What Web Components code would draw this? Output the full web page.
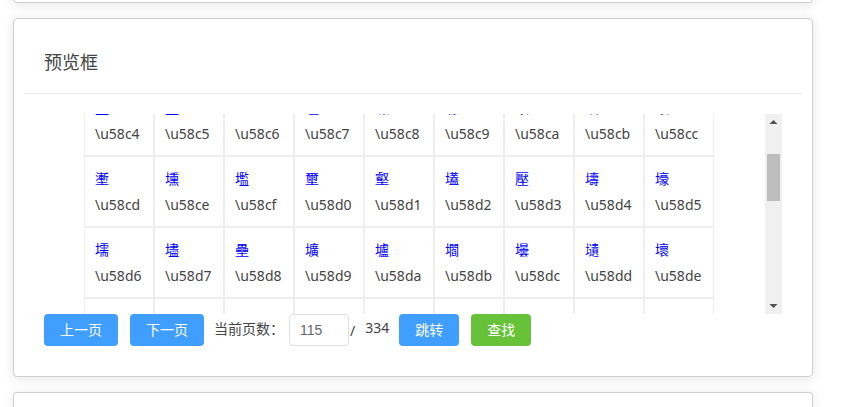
<!DOCTYPE html>
<html lang="zh">
<head>
<meta charset="utf-8">
<title>预览框</title>
<style>
html, body { margin: 0; height: 100%; overflow: hidden; background: #fff; }
body { font-family: "Noto Sans", "Noto Sans CJK SC", sans-serif; color: #444; }
</style>
</head>
<body>
<demo-page>
    <stub-card></stub-card>
    <preview-card heading="预览框">
        <glyph-scroller first="0x58c4" rows="3" blank-rows="1"></glyph-scroller>
        <pager-bar current="115" total="334"></pager-bar>
    </preview-card>
    <stub-card></stub-card>
</demo-page>

<script>
const GLYPH_COLUMNS = 9;
const CARD_STYLES = `
    box-sizing: border-box;
    width: 800px;
    background: #fff;
    border: 1px solid #cfcfcf;
    border-radius: 4px;
    box-shadow: 0 2px 12px rgba(0, 0, 0, 0.1);
`;

class DemoPage extends HTMLElement {
    constructor() {
        super();
        this.attachShadow({ mode: "open" });
        this.shadowRoot.innerHTML = `
<style>
:host { display: flex; flex-direction: column; gap: 15px; padding-left: 13px; margin-top: -38px; }
</style>
<slot></slot>
`;
    }
}

class StubCard extends HTMLElement {
    constructor() {
        super();
        this.attachShadow({ mode: "open" });
        this.shadowRoot.innerHTML = `
<style>
:host { display: block; height: 41px; ${CARD_STYLES} }
:host(:last-child) { height: 15px; border-bottom: 0; border-radius: 4px 4px 0 0; }
</style>
`;
    }
}

class PreviewCard extends HTMLElement {
    constructor() {
        super();
        this.attachShadow({ mode: "open" });
        this.shadowRoot.innerHTML = `
<style>
:host { display: block; height: 359px; ${CARD_STYLES} }
.header {
    box-sizing: content-box;
    display: flex;
    align-items: center;
    height: 64px;
    margin: 0 10px;
    padding: 10px 20px 0;
    border-bottom: 1px solid #ebebeb;
    font-size: 18px;
    color: #444;
}
.body { padding: 20px 30px 0; }
</style>
<div class="header"></div>
<div class="body"><slot></slot></div>
`;
    }

    connectedCallback() {
        this.shadowRoot.querySelector(".header").textContent = this.getAttribute("heading");
    }
}

class GlyphScroller extends HTMLElement {
    constructor() {
        super();
        this.attachShadow({ mode: "open" });
        this.shadowRoot.innerHTML = `
<style>
:host { display: flex; height: 200px; }
.view { flex: 1; overflow: hidden; padding-left: 40px; }
.grid {
    display: grid;
    grid-template-columns: repeat(${GLYPH_COLUMNS}, 70px);
    grid-auto-rows: 71px;
    margin-top: -29px;
}
</style>
<div class="view"><div class="grid"></div></div>
<glyph-scrollbar></glyph-scrollbar>
`;
    }

    connectedCallback() {
        const grid = this.shadowRoot.querySelector(".grid");
        const first = parseInt(this.getAttribute("first"), 16);
        const count = Number(this.getAttribute("rows")) * GLYPH_COLUMNS;
        const blanks = Number(this.getAttribute("blank-rows")) * GLYPH_COLUMNS;

        for (let i = 0; i < count; i++) {
            const cell = document.createElement("glyph-cell");
            cell.setAttribute("code", (first + i).toString(16));
            grid.appendChild(cell);
        }

        // the next row only shows its borders above the pager
        for (let i = 0; i < blanks; i++) {
            grid.appendChild(document.createElement("glyph-cell"));
        }
    }
}

class GlyphCell extends HTMLElement {
    constructor() {
        super();
        this.attachShadow({ mode: "open" });
        this.shadowRoot.innerHTML = `
<style>
:host {
    box-sizing: border-box;
    display: flex;
    flex-direction: column;
    justify-content: center;
    gap: 6px;
    padding-left: 10px;
    border: 1px solid #eeeeee;
    font-size: 14px;
    line-height: 20px;
    color: #444;
}
.char { color: #0000ff; }
</style>
<div class="char"></div>
<div class="code"></div>
`;
    }

    connectedCallback() {
        const code = this.getAttribute("code");
        if (!code) return;

        this.shadowRoot.querySelector(".char").textContent = String.fromCharCode(parseInt(code, 16));
        this.shadowRoot.querySelector(".code").textContent = "\\u" + code;
    }
}

class GlyphScrollbar extends HTMLElement {
    constructor() {
        super();
        this.attachShadow({ mode: "open" });
        this.shadowRoot.innerHTML = `
<style>
:host { display: flex; flex-direction: column; width: 17px; background: #f0f0f0; }
.arrow { display: block; width: 17px; height: 17px; flex: none; }
.track { flex: 1; padding: 23px 2px 0; }
.thumb { height: 47px; background: #bdbdbd; }
</style>
<svg class="arrow" viewBox="0 0 17 17"><path d="M8.5 6 L12.5 10 L4.5 10 Z" fill="#505050"/></svg>
<div class="track"><div class="thumb"></div></div>
<svg class="arrow" viewBox="0 0 17 17"><path d="M4.5 7 L12.5 7 L8.5 11 Z" fill="#505050"/></svg>
`;
    }
}

class UiButton extends HTMLElement {
    constructor() {
        super();
        this.attachShadow({ mode: "open" });
        this.shadowRoot.innerHTML = `
<style>
:host {
    box-sizing: border-box;
    display: flex;
    align-items: center;
    justify-content: center;
    height: 32px;
    width: 60px;
    padding-bottom: 2px;
    border-radius: 4px;
    background: #409eff;
    color: #fff;
    font-size: 14px;
}
:host([wide]) { width: 74px; }
:host([kind="success"]) { background: #67c23a; }
</style>
<slot></slot>
`;
    }
}

class PagerBar extends HTMLElement {
    constructor() {
        super();
        this.attachShadow({ mode: "open" });
        this.shadowRoot.innerHTML = `
<style>
:host { display: flex; align-items: center; height: 32px; font-size: 14px; color: #444; }
ui-button { margin-right: 12px; }
.label { margin-left: -2px; margin-right: 5px; margin-bottom: 5px; }
input {
    box-sizing: border-box;
    width: 60px;
    height: 32px;
    padding: 0 10px;
    border: 1px solid #dcdfe6;
    border-radius: 4px;
    outline: none;
    font: 14px "Liberation Sans", sans-serif;
    color: #666;
}
.slash { margin-left: 1px; margin-right: 10px; }
.total { margin-right: 10px; margin-bottom: 5px; }
</style>
<ui-button wide>上一页</ui-button>
<ui-button wide>下一页</ui-button>
<span class="label">当前页数：</span>
<input type="text">
<span class="slash">/</span>
<span class="total"></span>
<ui-button>跳转</ui-button>
<ui-button kind="success">查找</ui-button>
`;
    }

    connectedCallback() {
        this.shadowRoot.querySelector("input").value = this.getAttribute("current");
        this.shadowRoot.querySelector(".total").textContent = this.getAttribute("total");
    }
}

customElements.define("demo-page", DemoPage);
customElements.define("stub-card", StubCard);
customElements.define("preview-card", PreviewCard);
customElements.define("glyph-cell", GlyphCell);
customElements.define("glyph-scrollbar", GlyphScrollbar);
customElements.define("glyph-scroller", GlyphScroller);
customElements.define("ui-button", UiButton);
customElements.define("pager-bar", PagerBar);
</script>
</body>
</html>
